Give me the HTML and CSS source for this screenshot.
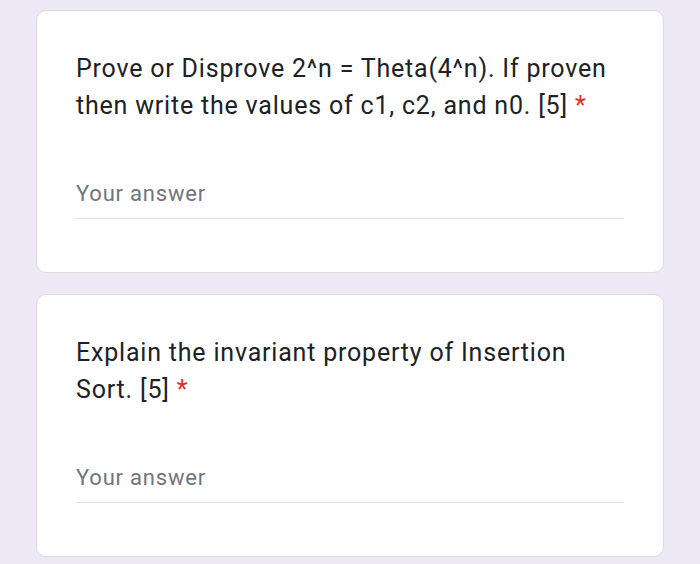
FILE: index.html
```html
<!DOCTYPE html>
<html>
<head>
<meta charset="utf-8">
<link rel="stylesheet" href="styles.css">
</head>
<body>
<div class="page">
  <div class="card">
    <div class="title">Prove or Disprove 2^n = Theta(4^n). If proven then write the values of c1, c2, and n0. [5]<span class="req"> *</span></div>
    <div class="answer">Your answer</div>
  </div>
  <div class="card">
    <div class="title">Explain the invariant property of Insertion Sort. [5]<span class="req"> *</span></div>
    <div class="answer">Your answer</div>
  </div>
</div>
</body>
</html>
```

FILE: styles.css
```css
html, body {
  margin: 0;
  padding: 0;
  background: #ede9f7;
}
.page {
  display: flex;
  flex-direction: column;
  gap: 21px;
  padding: 10px 36px 0 36px;
}
.card {
  background: #ffffff;
  border: 1px solid #dadce0;
  border-radius: 10px;
  padding: 39px 39px 53px 39px;
  font-family: Roboto, "Noto Sans", sans-serif;
}
.title {
  font-size: 25px;
  line-height: 37px;
  letter-spacing: 0.8px;
  color: #202124;
  width: 540px;
}
.req {
  color: #d93025;
}
.answer {
  margin-top: 54px;
  width: 548px;
  font-size: 22px;
  line-height: 32px;
  letter-spacing: 0.8px;
  color: #70757a;
  padding-bottom: 8px;
  border-bottom: 1px solid #e0e0e0;
}
```
